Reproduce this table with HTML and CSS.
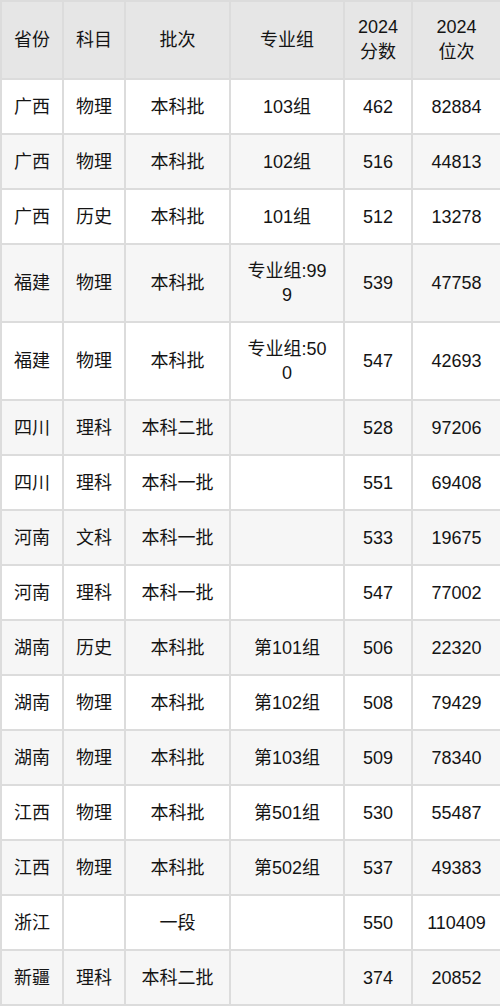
FILE: index.html
```html
<!DOCTYPE html>
<html lang="zh-CN">
<head>
<meta charset="utf-8">
<title>2024 分数位次</title>
<link rel="stylesheet" href="styles.css">
</head>
<body>
<table class="score-table">
  <colgroup>
    <col class="c-prov">
    <col class="c-subj">
    <col class="c-batch">
    <col class="c-group">
    <col class="c-score">
    <col class="c-rank">
  </colgroup>
  <thead>
    <tr class="head-row">
      <th>省份</th><th>科目</th><th>批次</th><th class="group">专业组</th><th>2024<br>分数</th><th>2024<br>位次</th>
    </tr>
  </thead>
  <tbody>
    <tr><td>广西</td><td>物理</td><td>本科批</td><td class="group">103组</td><td>462</td><td>82884</td></tr>
    <tr><td>广西</td><td>物理</td><td>本科批</td><td class="group">102组</td><td>516</td><td>44813</td></tr>
    <tr><td>广西</td><td>历史</td><td>本科批</td><td class="group">101组</td><td>512</td><td>13278</td></tr>
    <tr class="tall"><td>福建</td><td>物理</td><td>本科批</td><td class="group">专业组:999</td><td>539</td><td>47758</td></tr>
    <tr class="tall"><td>福建</td><td>物理</td><td>本科批</td><td class="group">专业组:500</td><td>547</td><td>42693</td></tr>
    <tr><td>四川</td><td>理科</td><td>本科二批</td><td class="group"></td><td>528</td><td>97206</td></tr>
    <tr><td>四川</td><td>理科</td><td>本科一批</td><td class="group"></td><td>551</td><td>69408</td></tr>
    <tr><td>河南</td><td>文科</td><td>本科一批</td><td class="group"></td><td>533</td><td>19675</td></tr>
    <tr><td>河南</td><td>理科</td><td>本科一批</td><td class="group"></td><td>547</td><td>77002</td></tr>
    <tr><td>湖南</td><td>历史</td><td>本科批</td><td class="group">第101组</td><td>506</td><td>22320</td></tr>
    <tr><td>湖南</td><td>物理</td><td>本科批</td><td class="group">第102组</td><td>508</td><td>79429</td></tr>
    <tr><td>湖南</td><td>物理</td><td>本科批</td><td class="group">第103组</td><td>509</td><td>78340</td></tr>
    <tr><td>江西</td><td>物理</td><td>本科批</td><td class="group">第501组</td><td>530</td><td>55487</td></tr>
    <tr><td>江西</td><td>物理</td><td>本科批</td><td class="group">第502组</td><td>537</td><td>49383</td></tr>
    <tr><td>浙江</td><td></td><td>一段</td><td class="group"></td><td>550</td><td>110409</td></tr>
    <tr><td>新疆</td><td>理科</td><td>本科二批</td><td class="group"></td><td>374</td><td>20852</td></tr>
  </tbody>
</table>
</body>
</html>
```
FILE: styles.css
```css
html, body {
  margin: 0;
  padding: 0;
  background: #ffffff;
}

body {
  font-family: "Liberation Sans", "Noto Sans CJK SC", sans-serif;
  font-size: 18px;
  color: #141414;
}

.score-table {
  width: 500px;
  table-layout: fixed;
  border-collapse: collapse;
  border: 2px solid #dcdcdc;
}

.c-prov { width: 62px; }
.c-subj { width: 62px; }
.c-batch { width: 105px; }
.c-group { width: 114px; }
.c-score { width: 68px; }
.c-rank { width: 89px; }

.score-table th,
.score-table td {
  border: 2px solid #dcdcdc;
  text-align: center;
  vertical-align: middle;
  padding: 0 2px;
  line-height: 24px;
  font-weight: normal;
  word-break: break-all;
}

.score-table .group {
  padding: 0 14px;
}

.head-row {
  height: 78px;
  background: #e6e6e6;
}

.head-row th {
  line-height: 25px;
}

.score-table tbody tr {
  height: 55px;
}

.score-table tbody tr.tall {
  height: 78px;
}

.score-table tbody tr:nth-child(even) {
  background: #f6f6f6;
}
```
